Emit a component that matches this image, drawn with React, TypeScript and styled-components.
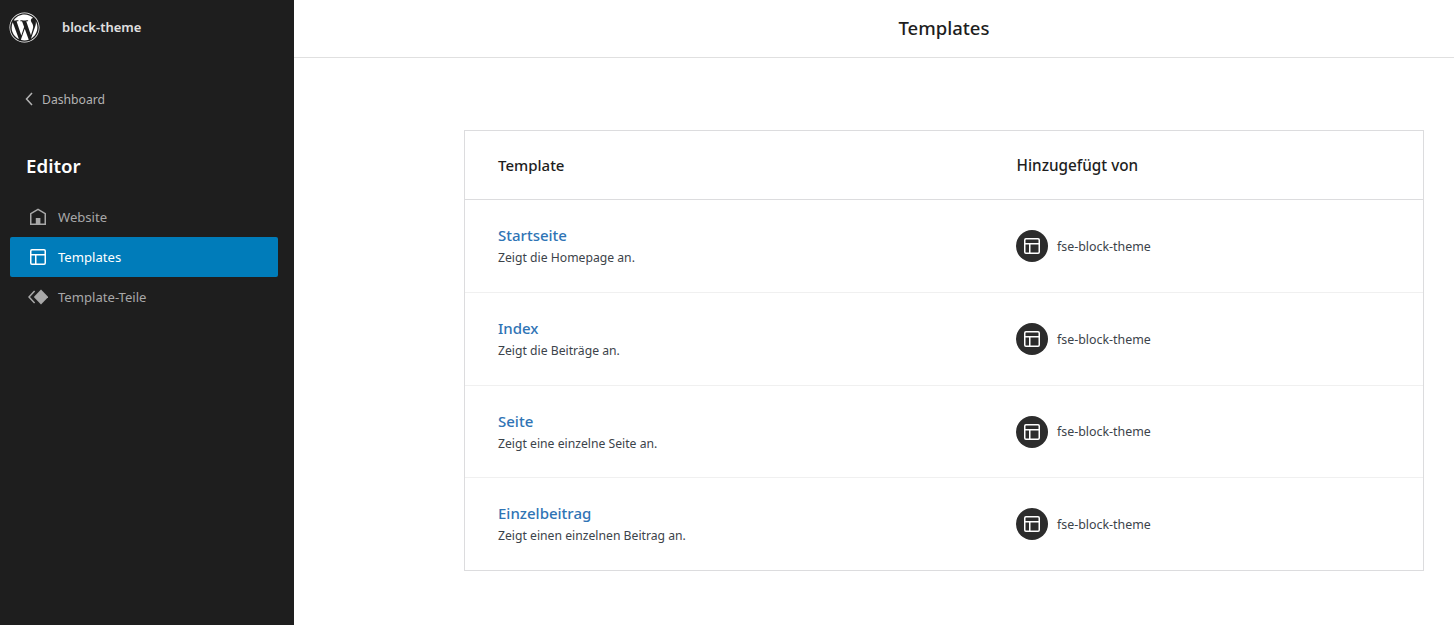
import React from "react";
import styled, { createGlobalStyle } from "styled-components";
import { FaWordpress } from "react-icons/fa";

const Global = createGlobalStyle`
  html, body { margin: 0; padding: 0; height: 100%; background: #fff; }
  body { font-family: "Noto Sans", "Open Sans", sans-serif; overflow: hidden; }
  #root { height: 100%; }
  * { box-sizing: border-box; }
`;

const Page = styled.div`
  display: flex;
  width: 1454px;
  height: 625px;
`;
const Sidebar = styled.aside`
  width: 294px;
  flex: none;
  background: #1e1e1e;
  display: flex;
  flex-direction: column;
`;
const Brand = styled.div`
  display: flex;
  align-items: center;
  height: 57px;
  padding: 0 0 2px 9px;
  gap: 22px;
  color: #fff;
`;
const SiteName = styled.span`
  font-size: 13px;
  font-weight: 600;
  color: #e0e0e0;
  margin-bottom: 2px;
`;
const Back = styled.div`
  display: flex;
  align-items: center;
  margin: 32px 0 0 23px;
  height: 20px;
  gap: 7px;
  font-size: 12.2px;
  color: #b4b4b4;
`;
const EditorTitle = styled.h1`
  margin: 44px 0 0 26px;
  font-size: 18.7px;
  line-height: 26px;
  font-weight: 600;
  color: #fff;
`;
const Nav = styled.nav`
  display: flex;
  flex-direction: column;
  margin: 18px 16px 0 10px;
`;
const NavItem = styled.div<{ $active?: boolean }>`
  display: flex;
  align-items: center;
  height: 40px;
  padding-left: 18px;
  gap: 10px;
  border-radius: 2px;
  font-size: 13.1px;
  background: ${(p) => (p.$active ? "#007cba" : "transparent")};
  color: ${(p) => (p.$active ? "#fff" : "#a8a8a8")};
`;
const Icon = styled.svg`
  width: 20px;
  height: 20px;
  flex: none;
  fill: none;
  stroke: currentColor;
  stroke-width: 1.5;
`;
const SolidIcon = styled.svg`
  width: 20px;
  height: 20px;
  flex: none;
`;
const Main = styled.main`
  flex: 1;
  display: flex;
  flex-direction: column;
`;
const Header = styled.header`
  height: 58px;
  padding: 0 0 2px 140px;
  border-bottom: 1px solid #e0e0e0;
  display: flex;
  align-items: center;
  justify-content: center;
  font-size: 18.5px;
  font-weight: 500;
  color: #1e1e1e;
`;
const Table = styled.section`
  margin: 72px 30px 0 170px;
  border: 1px solid #dcdcde;
  display: flex;
  flex-direction: column;
`;
const HeadRow = styled.div`
  display: grid;
  grid-template-columns: 518.5px 1fr;
  height: 69px;
  padding-left: 33px;
  align-items: center;
  border-bottom: 1px solid #dcdcde;
  font-size: 15px;
  font-weight: 500;
  color: #1e1e1e;
`;
const SecondHead = styled.span`
  font-size: 15.3px;
`;
const Row = styled.div<{ $h: number }>`
  display: grid;
  grid-template-columns: 518px 1fr;
  height: ${(p) => p.$h}px;
  padding-left: 33px;
  align-items: center;
  border-bottom: 1px solid #f0f0f0;
  &:last-child { border-bottom: none; }
`;
const TemplateName = styled.div`
  font-size: 15px;
  line-height: 20px;
  font-weight: 500;
  color: #2f74b5;
`;
const TemplateDesc = styled.div`
  font-size: 12.2px;
  line-height: 18px;
  margin-top: 4px;
  color: #3c434a;
`;
const Author = styled.div`
  display: flex;
  align-items: center;
  gap: 9px;
  font-size: 12.4px;
  color: #3c434a;
`;
const Avatar = styled.span`
  width: 32px;
  height: 32px;
  border-radius: 50%;
  background: #2c2c2c;
  color: #fff;
  display: flex;
  align-items: center;
  justify-content: center;
`;

const LayoutIcon = () => (
  <Icon viewBox="0 0 20 20">
    <rect x="2.75" y="2.75" width="14.5" height="14.5" rx="1.2" />
    <path d="M2.75 7.75h14.5M7.75 7.75v9.5" />
  </Icon>
);
const HomeIcon = () => (
  <SolidIcon viewBox="0 0 20 20">
    <path d="M10 2.4 2.75 6.6v10.65h14.5V6.6z" fill="none" stroke="currentColor" strokeWidth="1.5" />
    <rect x="7.8" y="11" width="4.6" height="6" fill="currentColor" />
  </SolidIcon>
);
const PartsIcon = () => (
  <SolidIcon viewBox="0 0 20 20">
    <path d="M13 2.5 20.2 10 13 17.5 5.8 10z" fill="currentColor" />
    <path d="M6.6 4 1 10l5.6 6" fill="none" stroke="currentColor" strokeWidth="1.5" />
  </SolidIcon>
);
const Chevron = () => (
  <svg width="12" height="16" viewBox="0 0 12 16">
    <path d="M9 2 3.5 8 9 14" fill="none" stroke="currentColor" strokeWidth="1.5" />
  </svg>
);

const rows = [
  { name: "Startseite", desc: "Zeigt die Homepage an.", h: 93 },
  { name: "Index", desc: "Zeigt die Beiträge an.", h: 93 },
  { name: "Seite", desc: "Zeigt eine einzelne Seite an.", h: 92 },
  { name: "Einzelbeitrag", desc: "Zeigt einen einzelnen Beitrag an.", h: 92 },
];

export default function App() {
  return (
    <Page>
      <Global />
      <Sidebar>
        <Brand>
          <FaWordpress size={31} />
          <SiteName>block-theme</SiteName>
        </Brand>
        <Back>
          <Chevron />
          Dashboard
        </Back>
        <EditorTitle>Editor</EditorTitle>
        <Nav>
          <NavItem><HomeIcon />Website</NavItem>
          <NavItem $active><LayoutIcon />Templates</NavItem>
          <NavItem><PartsIcon />Template-Teile</NavItem>
        </Nav>
      </Sidebar>
      <Main>
        <Header>Templates</Header>
        <Table>
          <HeadRow>
            <span>Template</span>
            <SecondHead>Hinzugefügt von</SecondHead>
          </HeadRow>
          {rows.map((r) => (
            <Row key={r.name} $h={r.h}>
              <div>
                <TemplateName>{r.name}</TemplateName>
                <TemplateDesc>{r.desc}</TemplateDesc>
              </div>
              <Author>
                <Avatar><LayoutIcon /></Avatar>
                fse-block-theme
              </Author>
            </Row>
          ))}
        </Table>
      </Main>
    </Page>
  );
}
